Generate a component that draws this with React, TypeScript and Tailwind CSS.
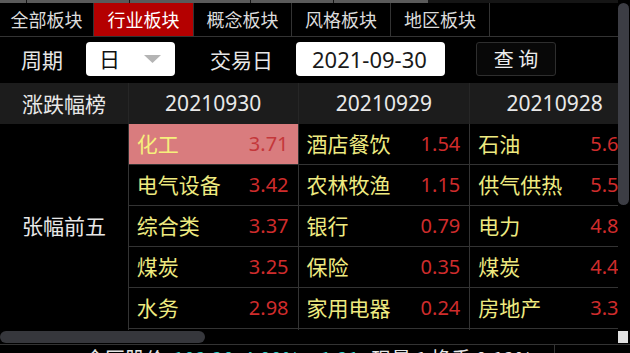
import React from "react";

const font = "font-['Noto_Sans_CJK_SC','Noto_Sans',sans-serif]";
const num = "font-['Noto_Sans','Noto_Sans_CJK_SC',sans-serif]";

type Cell = { name: string; value: string; hi?: boolean };

const cols: { date: string; w: string; cells: Cell[] }[] = [
  {
    date: "20210930",
    w: "w-[170px]",
    cells: [
      { name: "化工", value: "3.71", hi: true },
      { name: "电气设备", value: "3.42" },
      { name: "综合类", value: "3.37" },
      { name: "煤炭", value: "3.25" },
      { name: "水务", value: "2.98" },
    ],
  },
  {
    date: "20210929",
    w: "w-[172px]",
    cells: [
      { name: "酒店餐饮", value: "1.54" },
      { name: "农林牧渔", value: "1.15" },
      { name: "银行", value: "0.79" },
      { name: "保险", value: "0.35" },
      { name: "家用电器", value: "0.24" },
    ],
  },
  {
    date: "20210928",
    w: "w-[170px]",
    cells: [
      { name: "石油", value: "5.63" },
      { name: "供气供热", value: "5.52" },
      { name: "电力", value: "4.86" },
      { name: "煤炭", value: "4.41" },
      { name: "房地产", value: "3.36" },
    ],
  },
];

const tabs = [
  { label: "全部板块", w: "w-[94px]" },
  { label: "行业板块", w: "w-[100px]", active: true },
  { label: "概念板块", w: "w-[98px]" },
  { label: "风格板块", w: "w-[99px]" },
  { label: "地区板块", w: "w-[99px]" },
];

export default function App() {
  return (
    <div className={`w-[630px] h-[353px] overflow-hidden bg-black ${font}`}>
      <div className="flex h-[344px]">
        {/* main scroll content */}
        <div className="w-[618px] flex flex-col overflow-hidden">
          {/* top strip */}
          <div className="flex h-[3px] shrink-0 bg-[#151515]">
            <div className="w-[26px] bg-[#5a5a5a]" />
            <div className="w-[102px] ml-[1px] bg-[#5a5a5a]" />
            <div className="w-[120px] ml-[1px] bg-[#5a5a5a]" />
            <div className="w-[82px] ml-[1px] bg-[#5a5a5a]" />
            <div className="w-[94px] ml-[1px] bg-[#5a5a5a]" />
          </div>
          {/* tabs */}
          <div className="flex h-[34px] shrink-0 border-b border-[#333]">
            {tabs.map((t) => (
              <div
                key={t.label}
                className={`${t.w} h-full flex items-center justify-center border-r border-[#333] text-[18px] ${
                  t.active ? "bg-[#b40000] text-white" : "text-[#dcdcdc]"
                }`}
              >
                {t.label}
              </div>
            ))}
          </div>
          {/* controls */}
          <div className="flex items-start h-[46px] shrink-0 pt-[5px] pl-[21px] text-[21px] text-[#e6e6e6]">
            <span className="w-[65px] h-[34px] leading-[34px]">周期</span>
            <div className="w-[89px] h-[34px] bg-white rounded-[4px] flex items-center pl-[13px] text-[#111]">
              <span>日</span>
              <svg className="ml-[24px]" width="17" height="8" viewBox="0 0 17 8">
                <polygon points="0,0 17,0 8.5,8" fill="#b4b4b4" />
              </svg>
            </div>
            <span className="ml-[35px] w-[86px] h-[34px] leading-[34px]">交易日</span>
            <div className={`w-[149px] h-[34px] bg-white rounded-[4px] flex items-center pl-[16px] text-[22px] text-[#1a1a1a] ${num}`}>
              2021-09-30
            </div>
            <div className="ml-[31px] w-[80px] h-[34px] rounded-[3px] border border-[#2e2e2e] bg-[#080808] flex items-center justify-center text-[20px] text-[#ececec]">
              查 询
            </div>
          </div>
          {/* table */}
          <div className="w-[640px] shrink-0">
            <div className="flex h-[41px] bg-[#1c1c1c] text-[21px] text-[#e8e8e8]">
              <div className="w-[129px] flex items-center justify-center border-r border-[#262626]">涨跌幅榜</div>
              {cols.map((c) => (
                <div key={c.date} className={`${c.w} flex items-center justify-center border-r border-[#262626] ${num}`}>
                  {c.date}
                </div>
              ))}
            </div>
            <div className="flex h-[206px] text-[21px]">
              <div className="w-[129px] border-r border-[#333] flex items-center justify-center text-[#e8e8e8] pb-[3px]">
                张幅前五
              </div>
              {cols.map((c) => (
                <div key={c.date} className={`${c.w} border-r border-[#333] flex flex-col`}>
                  {c.cells.map((cell) => (
                    <div
                      key={cell.name}
                      className={`h-[41px] shrink-0 border-b border-[#333] flex items-center justify-between pl-[8px] pr-[9px] ${
                        cell.hi ? "bg-[#d97c7e]" : ""
                      }`}
                    >
                      <span className={cell.hi ? "text-[#f6f07c]" : "text-[#eeea80]"}>{cell.name}</span>
                      <span className={`text-[20px] ${num} ${cell.hi ? "text-[#c4373a]" : "text-[#cf2c2c]"}`}>
                        {cell.value}
                      </span>
                    </div>
                  ))}
                </div>
              ))}
            </div>
          </div>
          {/* horizontal scrollbar */}
          <div className="h-[14px] shrink-0 flex items-start pt-[1px]">
            <div className="w-[205px] h-[12px] rounded-full bg-[#36373c]" />
          </div>
        </div>
        {/* vertical scrollbar */}
        <div className="w-[12px] flex flex-col items-start">
          <div className="mt-[3px] w-[11px] h-[202px] rounded-full bg-[#3c3d44]" />
          <div className="flex-1" />
          <div className="w-[10px] h-[12px] mb-[1px] bg-[#e0e0e0]" />
        </div>
      </div>
      {/* status bar */}
      <div className="h-[30px] border-t border-[#333] flex text-[20px] leading-[28px]">
        <div className="w-[555px] border-r border-[#333] flex pl-[85px]">
          <span className="text-[#e6e6e6]">全区股价</span>
          <span className="ml-[8px] text-[#2fd0c8]">102.20&nbsp;&nbsp;4.00%&nbsp;&nbsp;+1.21</span>
          <span className="ml-[12px] text-[#e6e6e6]">现量 1 换手 0.12%</span>
        </div>
      </div>
    </div>
  );
}
